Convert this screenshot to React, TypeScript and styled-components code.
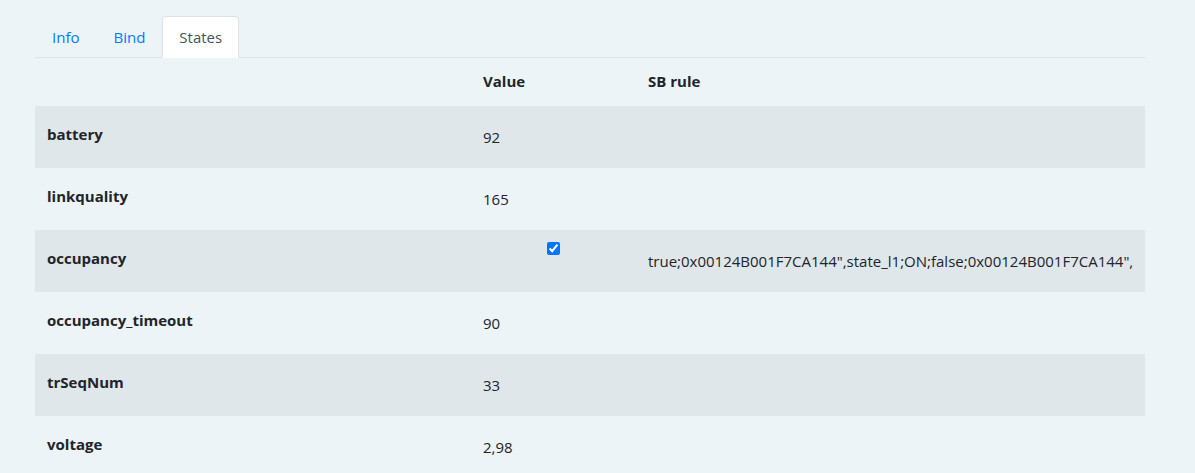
import React from "react";
import styled, { createGlobalStyle } from "styled-components";

const Global = createGlobalStyle`
  html, body { margin: 0; padding: 0; background: #edf4f8; }
  body { font-family: "Open Sans", "Noto Sans", sans-serif; font-size: 15px; line-height: 24px; color: #212529; }
`;

const Page = styled.div`
  padding: 16px 0 0 35px;
  width: 1110px;
`;

const Tabs = styled.div`
  display: flex;
  border-bottom: 1px solid #dee2e6;
`;

const Tab = styled.div<{ $active?: boolean }>`
  padding: 8px 16px;
  border: 1px solid ${(p) => (p.$active ? "#dee2e6" : "transparent")};
  border-bottom-color: ${(p) => (p.$active ? "#ffffff" : "transparent")};
  border-radius: 4px 4px 0 0;
  margin-bottom: -1px;
  background: ${(p) => (p.$active ? "#ffffff" : "transparent")};
  color: ${(p) => (p.$active ? "#495057" : "#007bff")};
`;

const Table = styled.div`
  display: grid;
  grid-template-columns: 436px 165px 1fr;
`;

const Row = styled.div<{ $striped?: boolean; $head?: boolean }>`
  display: contents;
  & > div {
    background: ${(p) => (p.$striped ? "#e0e7eb" : "transparent")};
    height: ${(p) => (p.$head ? "48px" : "62px")};
  }
`;

const NameCell = styled.div`
  box-sizing: border-box;
  padding: 16px 12px 0;
  font-weight: 700;
`;

const HeadCell = styled.div`
  box-sizing: border-box;
  padding: 11px 12px 0;
  font-weight: 700;
`;

const ValueCell = styled.div<{ $center?: boolean }>`
  box-sizing: border-box;
  padding: ${(p) => (p.$center ? "12px" : "19px")} 12px 0;
  text-align: ${(p) => (p.$center ? "center" : "left")};
`;

const RuleCell = styled.div`
  box-sizing: border-box;
  padding: 19px 12px 0;
`;

const Check = styled.input`
  width: 13px;
  height: 13px;
  margin: 0;
  display: inline-block;
  vertical-align: top;
`;

type R = { name: string; value?: string; check?: boolean; rule?: string };

const rows: R[] = [
  { name: "battery", value: "92" },
  { name: "linkquality", value: "165" },
  {
    name: "occupancy",
    check: true,
    rule: 'true;0x00124B001F7CA144",state_l1;ON;false;0x00124B001F7CA144",',
  },
  { name: "occupancy_timeout", value: "90" },
  { name: "trSeqNum", value: "33" },
  { name: "voltage", value: "2,98" },
];

export default function App() {
  return (
    <>
      <Global />
      <Page>
        <Tabs>
          <Tab>Info</Tab>
          <Tab>Bind</Tab>
          <Tab $active>States</Tab>
        </Tabs>
        <Table>
          <Row $head>
            <HeadCell />
            <HeadCell>Value</HeadCell>
            <HeadCell>SB rule</HeadCell>
          </Row>
          {rows.map((r, i) => (
            <Row key={r.name} $striped={i % 2 === 0}>
              <NameCell>{r.name}</NameCell>
              {r.check ? (
                <ValueCell $center>
                  <Check type="checkbox" checked readOnly />
                </ValueCell>
              ) : (
                <ValueCell>{r.value}</ValueCell>
              )}
              <RuleCell>{r.rule}</RuleCell>
            </Row>
          ))}
        </Table>
      </Page>
    </>
  );
}
